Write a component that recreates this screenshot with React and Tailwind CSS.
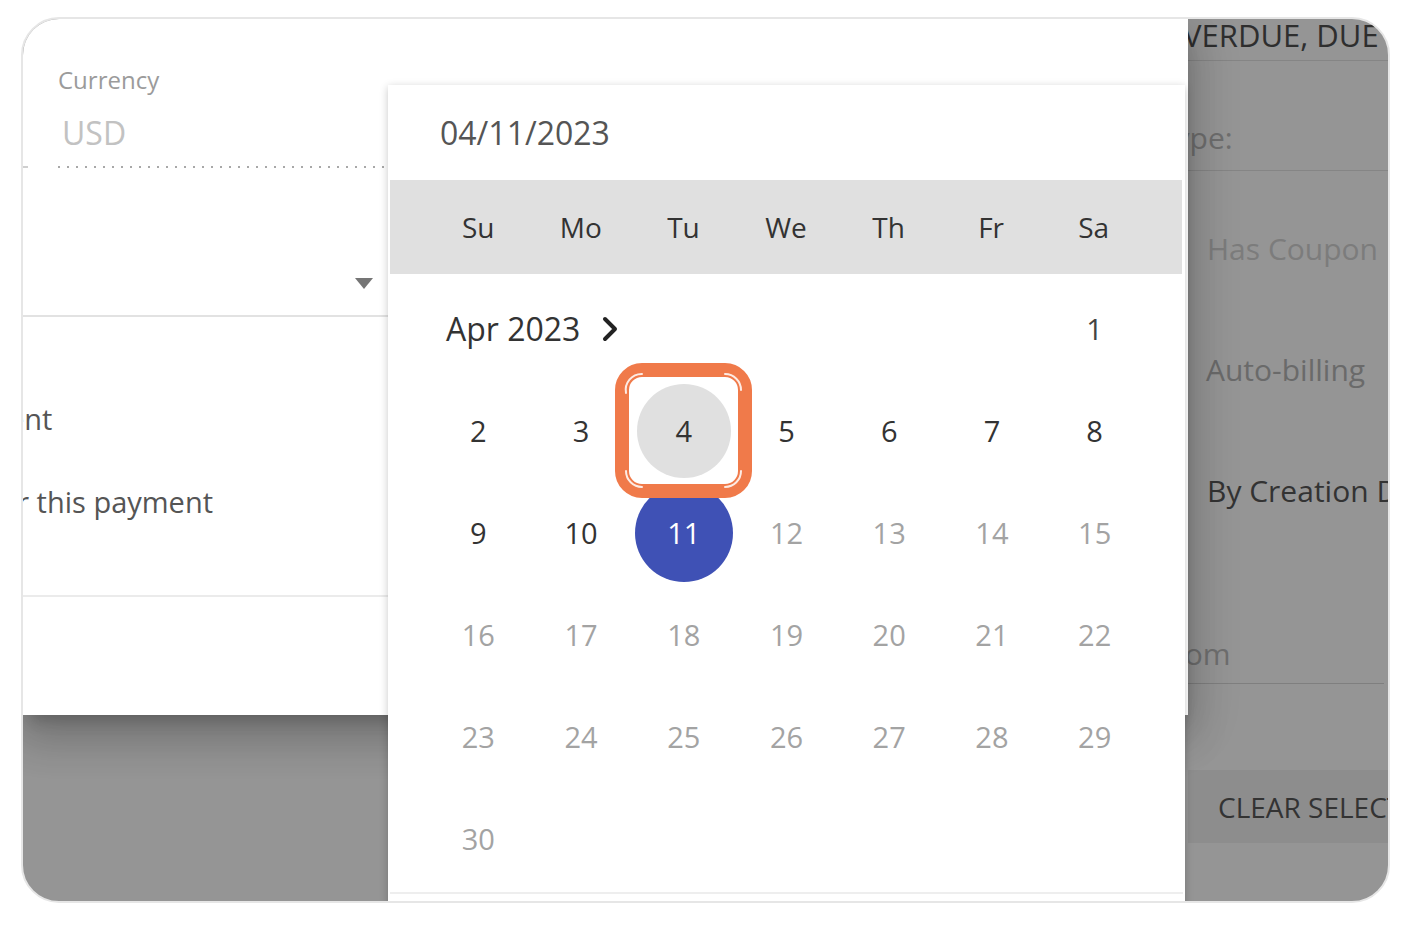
import React from 'react';

const weekDays = ['Su', 'Mo', 'Tu', 'We', 'Th', 'Fr', 'Sa'];

const dates = [];
for (let d = 2; d <= 30; d++) dates.push(d);

// orange marker drawn around the hovered day
const HighlightBox = () => (
    <svg className="absolute -left-[17px] -top-[17px] pointer-events-none" width="137" height="135" viewBox="0 0 137 135" fill="none">
        <rect x="7" y="7" width="123" height="121" rx="20" stroke="#f07a4a" strokeWidth="14" />
        <g stroke="#ffffff" strokeOpacity="0.85" strokeWidth="2" strokeLinecap="round">
            <path d="M 11 30 A 16 16 0 0 1 27 11" />
            <path d="M 110 11 A 16 16 0 0 1 126 27" />
            <path d="M 126 108 A 16 16 0 0 1 110 124" />
            <path d="M 27 124 A 16 16 0 0 1 11 108" />
        </g>
    </svg>
);

const DayCell = ({ day }) => {
    const disabled = day > 11;

    if (day === 4) {
        return (
            <div className="relative flex items-center justify-center">
                <div className="w-[94px] h-[94px] rounded-full bg-[#e0e0e0] flex items-center justify-center text-[#333]">
                    4
                </div>
                <HighlightBox />
            </div>
        );
    }

    if (day === 11) {
        return (
            <div className="flex items-center justify-center">
                <div className="w-[98px] h-[98px] rounded-full bg-[#3f51b5] flex items-center justify-center text-white">
                    11
                </div>
            </div>
        );
    }

    return (
        <div className={disabled ? 'flex items-center justify-center text-[#a3a3a3]' : 'flex items-center justify-center text-[#333]'}>
            {day}
        </div>
    );
};

const Calendar = () => (
    <div className="absolute left-[365px] top-[66px] w-[797px] h-[840px] z-20 bg-white shadow-[0_2px_8px_rgba(0,0,0,0.22)]">
        {/* Selected date */}
        <div className="h-[95px] flex items-center pl-[52px] text-[32px] text-[#555]">04/11/2023</div>

        {/* Week header */}
        <div className="ml-[2px] mr-[3px] h-[94px] bg-[#e0e0e0] grid grid-cols-7 items-center pl-[37px] pr-[37px] text-[28px] text-[#333]">
            {weekDays.map((w) => (
                <div key={w} className="text-center">{w}</div>
            ))}
        </div>

        {/* Days */}
        <div className="mt-[4px] px-[39px] grid grid-cols-7 auto-rows-[102px] text-[29px]">
            <div className="col-span-6 flex items-center pl-[19px] text-[32px] text-[#333]">
                <span>Apr 2023</span>
                <svg className="ml-[21px]" width="18" height="26" viewBox="0 0 18 26" fill="none">
                    <polyline points="4,3 14,13 4,23" stroke="#222" strokeWidth="4" strokeLinecap="round" strokeLinejoin="round" />
                </svg>
            </div>
            <div className="flex items-center justify-center text-[#444]">1</div>
            {dates.map((d) => (
                <DayCell key={d} day={d} />
            ))}
        </div>

        <div className="mt-[2px] mx-[2px] h-[2px] bg-[#eeeeee]" />
    </div>
);

const PaymentModal = () => (
    <div className="relative z-10 h-[696px] bg-white shadow-[0_11px_15px_-7px_rgba(0,0,0,0.2),0_24px_38px_3px_rgba(0,0,0,0.14),0_9px_46px_8px_rgba(0,0,0,0.12)] overflow-hidden">
        <div className="pl-[35px] pt-[45px]">
            <div className="h-[32px] leading-[32px] text-[24px] text-[#9b9b9b]">Currency</div>
            <div className="mt-[17px] h-[40px] leading-[40px] text-[32px] text-[#c2c2c2] pl-[4px]">USD</div>
        </div>

        {/* disabled underline */}
        <div className="mt-[13px] flex items-center w-[420px]">
            <div className="w-[5px] h-[2px] bg-[#cfcfcf]" />
            <div className="ml-[30px] flex-1 h-[2px] bg-[linear-gradient(to_right,#a8a8a8_2px,transparent_2px)] bg-[length:9px_2px] bg-repeat-x" />
        </div>

        {/* select */}
        <div className="w-[380px] h-[149px] border-b-2 border-[#e2e2e2] flex items-end justify-end pr-[30px] pb-[26px]">
            <div className="w-0 h-0 border-l-[9px] border-r-[9px] border-t-[11px] border-l-transparent border-r-transparent border-t-[#757575]" />
        </div>

        <div className="mt-[82px] h-[40px] leading-[40px] text-[29px] text-[#555] whitespace-nowrap -ml-[90px]">Payment</div>
        <div className="mt-[43px] h-[40px] leading-[40px] text-[29px] text-[#555] whitespace-nowrap -ml-[33px]">for this payment</div>

        <div className="mt-[73px] w-[380px] h-[2px] bg-[#ebebeb]" />
    </div>
);

const FilterColumn = () => (
    <div className="flex-1 flex flex-col overflow-hidden whitespace-nowrap text-[30px]">
        <div className="h-[42px] border-b border-[#858585]">
            <div className="h-[32px] leading-[32px] -ml-[29px] text-[31px] text-[#2e2e2e]">OVERDUE, DUE DATE</div>
        </div>
        <div className="h-[110px] border-b border-[#858585] pt-[57px]">
            <div className="h-[40px] leading-[40px] -ml-[30px] text-[#6e6e6e]">Type:</div>
        </div>
        <div className="mt-[58px] h-[40px] leading-[40px] pl-[19px] text-[#7c7c7c]">Has Coupon</div>
        <div className="mt-[81px] h-[40px] leading-[40px] pl-[18px] text-[#6a6a6a]">Auto-billing</div>
        <div className="mt-[81px] h-[40px] leading-[40px] pl-[19px] text-[#333]">By Creation Date</div>
        <div className="mt-[123px] h-[50px] mr-[4px] border-b border-[#7f7f7f]">
            <div className="h-[40px] leading-[40px] -ml-[31px] text-[#6f6f6f]">From</div>
        </div>
        <div className="mt-[86px] h-[73px] bg-[#8d8d8d] flex items-center pl-[30px] text-[28px] text-[#333]">
            CLEAR SELECTION
        </div>
    </div>
);

export default function App() {
    return (
        <div className="w-[1406px] h-[926px] bg-white pt-[17px] pl-[21px] font-['Open_Sans',sans-serif]">
            <div className="relative w-[1369px] h-[886px] rounded-[38px] border-2 border-[#e6e6e6] bg-[#959595] overflow-hidden flex">
                <div className="relative w-[1165px] shrink-0">
                    <PaymentModal />
                    <Calendar />
                </div>
                <FilterColumn />
            </div>
        </div>
    );
}
